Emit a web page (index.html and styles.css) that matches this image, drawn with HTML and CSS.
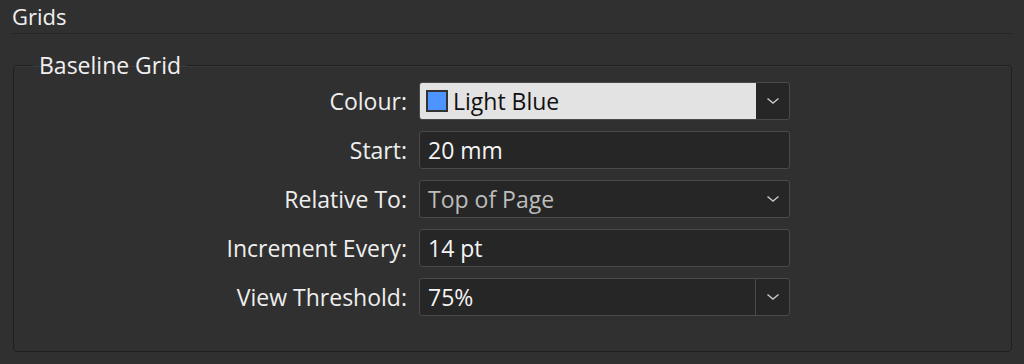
FILE: index.html
```html
<!DOCTYPE html>
<html lang="en">
<head>
    <meta charset="UTF-8">
    <title>Grids</title>
    <link rel="stylesheet" href="styles.css">
</head>
<body>
    <div class="panel">
        <h1 class="section-title">Grids</h1>

        <fieldset class="group">
            <legend>Baseline Grid</legend>

            <div class="form-grid">
                <label class="field-label">Colour:</label>
                <div class="field combo light">
                    <div class="combo-value">
                        <span class="swatch"></span>
                        <span>Light Blue</span>
                    </div>
                    <div class="combo-button">
                        <svg width="14" height="8" viewBox="0 0 14 8"><path d="M1.5 1.5 L7 6 L12.5 1.5" fill="none" stroke="#c8c8c8" stroke-width="1.4"/></svg>
                    </div>
                </div>

                <label class="field-label">Start:</label>
                <div class="field">
                    <div class="field-value">20 mm</div>
                </div>

                <label class="field-label">Relative To:</label>
                <div class="field select">
                    <div class="field-value muted">Top of Page</div>
                    <div class="select-arrow">
                        <svg width="14" height="8" viewBox="0 0 14 8"><path d="M1.5 1.5 L7 6 L12.5 1.5" fill="none" stroke="#c8c8c8" stroke-width="1.4"/></svg>
                    </div>
                </div>

                <label class="field-label">Increment Every:</label>
                <div class="field">
                    <div class="field-value">14 pt</div>
                </div>

                <label class="field-label">View Threshold:</label>
                <div class="field combo">
                    <div class="field-value">75%</div>
                    <div class="combo-button">
                        <svg width="14" height="8" viewBox="0 0 14 8"><path d="M1.5 1.5 L7 6 L12.5 1.5" fill="none" stroke="#c8c8c8" stroke-width="1.4"/></svg>
                    </div>
                </div>
            </div>
        </fieldset>
    </div>
</body>
</html>
```

FILE: styles.css
```css
body {
    margin: 0;
    background-color: #303030;
    font-family: "Open Sans", "Liberation Sans", sans-serif;
    color: #eeeeee;
}
.panel {
    padding: 0 12px 0 12px;
}
.section-title {
    margin: 0;
    height: 33px;
    line-height: 32px;
    font-size: 22px;
    font-weight: normal;
    color: #f0f0f0;
    border-bottom: 1px solid #262626;
}
.group {
    margin: 21px 0 0 1px;
    padding: 7px 0 35px 0;
    border: 1px solid #1f1f1f;
    border-radius: 4px;
    box-shadow: 0 1px 0 #3a3a3a, inset 0 1px 0 #3a3a3a;
}
.group legend {
    margin-left: 19px;
    padding: 0 6px;
    font-size: 23px;
    line-height: 20px;
    color: #f0f0f0;
}
.form-grid {
    display: grid;
    grid-template-columns: 393px 371px;
    column-gap: 12px;
    row-gap: 11px;
}
.field-label {
    text-align: right;
    font-size: 23px;
    line-height: 38px;
    color: #eeeeee;
}
.field {
    display: flex;
    height: 38px;
    box-sizing: border-box;
    border: 1px solid #4a4a4a;
    border-radius: 3px;
    background-color: #262626;
    overflow: hidden;
}
.field-value {
    flex: 1;
    padding-left: 8px;
    font-size: 23px;
    line-height: 36px;
    color: #f4f4f4;
}
.field-value.muted {
    color: #bdbdbd;
}
.combo-value {
    flex: 1;
    display: flex;
    align-items: center;
    gap: 5px;
    padding-left: 6px;
    background-color: #e3e3e3;
    color: #111;
    font-size: 23px;
}
.swatch {
    width: 18px;
    height: 18px;
    border: 2px solid #333;
    background-color: #4d94ff;
}
.combo-button {
    width: 33px;
    display: flex;
    align-items: center;
    justify-content: center;
    border-left: 1px solid #4a4a4a;
}
.combo.light .combo-button {
    border-left: none;
}
.select-arrow {
    width: 33px;
    display: flex;
    align-items: center;
    justify-content: center;
}
```
